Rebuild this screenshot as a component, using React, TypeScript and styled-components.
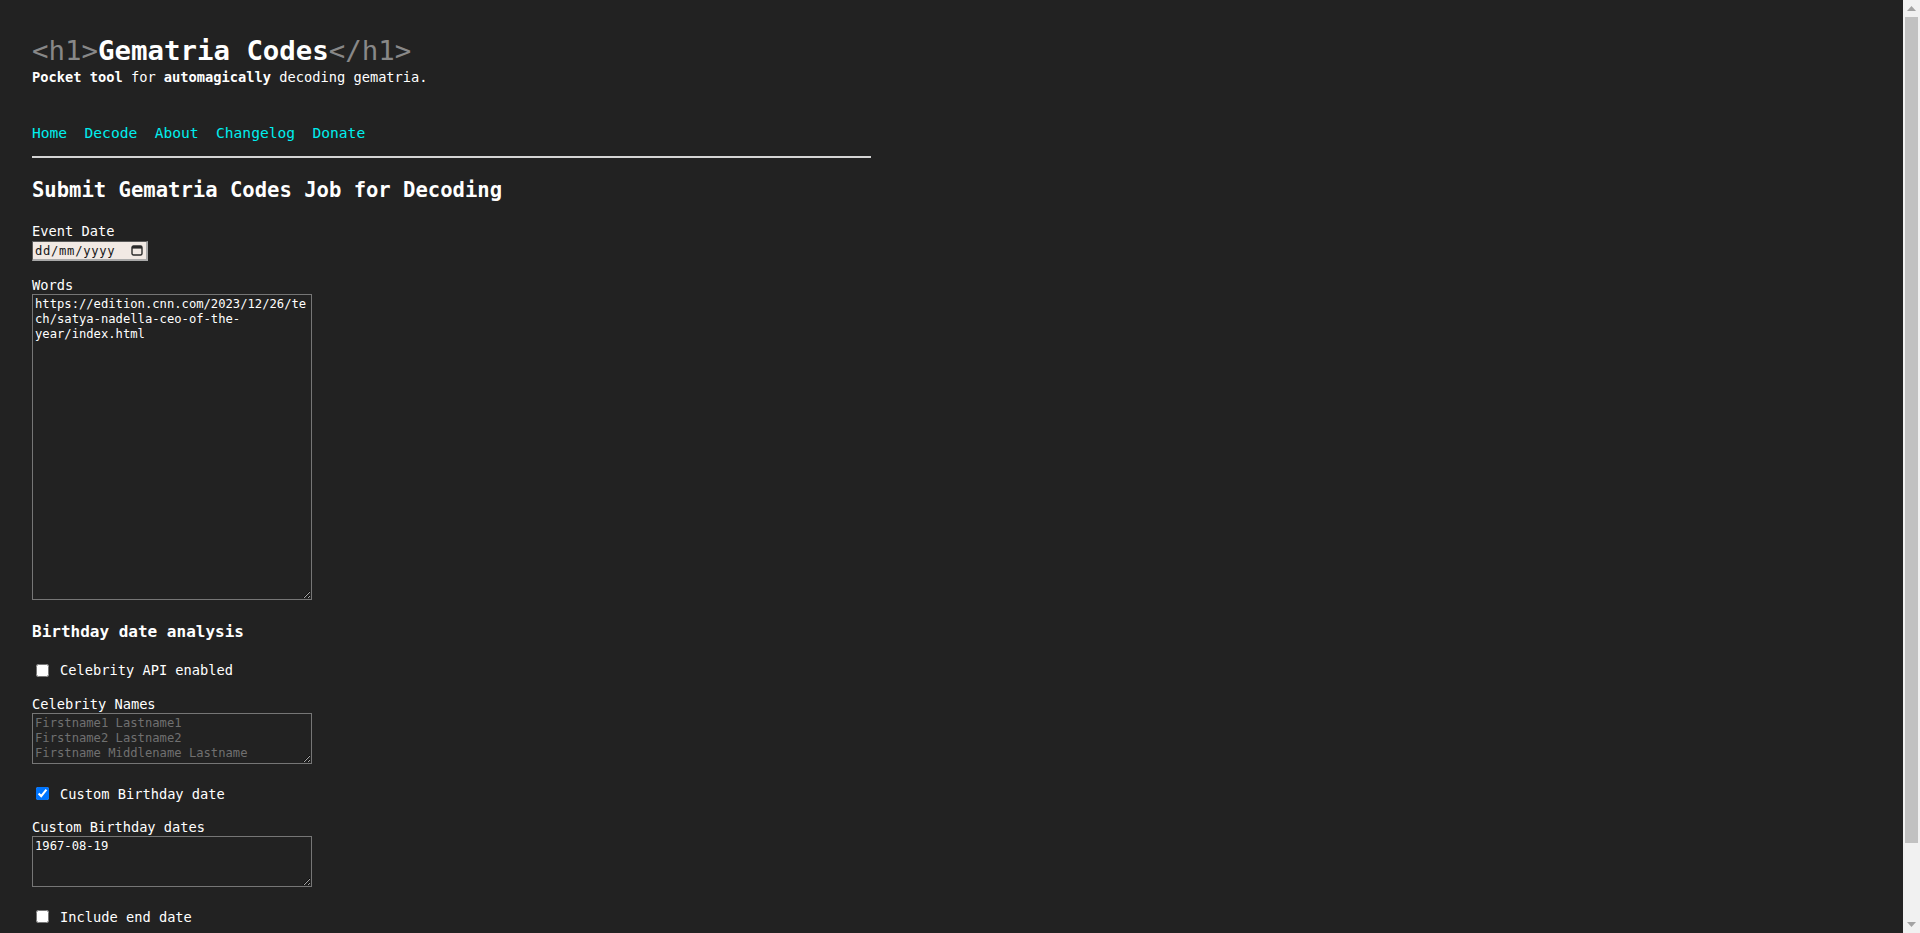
import * as React from 'react';
import styled, { createGlobalStyle } from 'styled-components';

const mono = `'DejaVu Sans Mono', 'Liberation Mono', monospace`;

const GlobalStyle = createGlobalStyle`
  html, body {
    margin: 0;
    padding: 0;
    background: #222;
  }
  html {
    scrollbar-width: none;
  }
  body {
    color: #fff;
    font-family: ${mono};
    font-size: 13.7px;
  }
`;

const Page = styled.div`
  padding: 33.5px 32px 36px;
`;

const Header = styled.header`
  width: 839px;
`;

const Title = styled.h1`
  margin: 0;
  font-size: 27.4px;
  line-height: 34px;
  font-weight: bold;
  color: #fff;
`;

const Tag = styled.span`
  font-weight: normal;
  color: #888;
`;

const Tagline = styled.p`
  margin: 0;
  font-size: 13.7px;
  line-height: 18px;
  b {
    font-weight: bold;
  }
`;

const Nav = styled.nav`
  display: flex;
  gap: 17.4px;
  margin-top: 37.5px;
  font-size: 14.6px;
  line-height: 20px;
  a {
    color: #0ee;
    text-decoration: none;
  }
`;

const Rule = styled.hr`
  margin: 13px 0 0;
  border: 0;
  border-top: 2px solid #d4d4d4;
  height: 0;
`;

const Form = styled.form`
  display: flex;
  flex-direction: column;
  align-items: flex-start;
`;

const Heading = styled.h2`
  margin: 19px 0 0;
  font-size: 20.55px;
  line-height: 26px;
  font-weight: bold;
`;

const SubHeading = styled.h3`
  margin: 22.5px 0 0;
  font-size: 16px;
  line-height: 20px;
  font-weight: bold;
`;

const Label = styled.label<{ $gap: number }>`
  display: block;
  margin-top: ${(p) => p.$gap}px;
  font-size: 13.7px;
  line-height: 18px;
`;

const DateBox = styled.div`
  display: flex;
  align-items: center;
  justify-content: space-between;
  box-sizing: border-box;
  width: 116px;
  height: 20px;
  margin-top: 1px;
  padding: 0 3px 0 2px;
  background: #f1e9e4;
  border-top: 1px solid #5a5a5a;
  border-left: 1px solid #5a5a5a;
  border-right: 2px solid #a9a9a9;
  border-bottom: 2px solid #a9a9a9;
  color: #161616;
  font-size: 12.18px;
  letter-spacing: 0.7px;
`;

const TextArea = styled.textarea`
  display: block;
  box-sizing: border-box;
  width: 280px;
  margin: 0;
  padding: 2px;
  background: #222;
  color: #fff;
  border: 1px solid #767676;
  font-family: ${mono};
  font-size: 12.18px;
  line-height: 15px;
  color-scheme: dark;
  outline: none;
  &::placeholder {
    color: #707070;
  }
`;

const CheckRow = styled.label<{ $gap: number }>`
  display: flex;
  align-items: center;
  height: 18px;
  margin-top: ${(p) => p.$gap}px;
  font-size: 13.7px;
  line-height: 18px;
  input {
    width: 13px;
    height: 13px;
    margin: 0 11px 0 4px;
  }
`;

const SubmitButton = styled.button`
  margin-top: 24px;
  padding: 4px 14px;
  font-family: ${mono};
  font-size: 13.7px;
`;

/* browser scrollbar, drawn over the right edge of the window */
const ScrollTrack = styled.div`
  position: fixed;
  top: 0;
  right: 0;
  width: 17px;
  height: 100vh;
  background: #f1f1f1;
  display: flex;
  flex-direction: column;
  align-items: center;
`;

const ScrollArrow = styled.div<{ $down?: boolean }>`
  height: 17px;
  display: flex;
  align-items: center;
  justify-content: center;
  margin-top: ${(p) => (p.$down ? 'auto' : '0')};
`;

const ScrollThumb = styled.div`
  width: 13px;
  height: 826px;
  background: #c1c1c1;
`;

function Arrow({ down }: { down?: boolean }) {
  return (
    <ScrollArrow $down={down}>
      <svg width="9" height="5" viewBox="0 0 9 5">
        <path d={down ? 'M0 0 H9 L4.5 5 Z' : 'M0 5 H9 L4.5 0 Z'} fill="#a3a3a3" />
      </svg>
    </ScrollArrow>
  );
}

function CalendarIcon() {
  return (
    <svg width="12" height="11" viewBox="0 0 12 11">
      <rect x="1" y="1" width="10" height="9" rx="1.5" fill="none" stroke="#2b2b2b" strokeWidth="1.4" />
      <rect x="1" y="1" width="10" height="2.6" fill="#2b2b2b" />
    </svg>
  );
}

export default function App() {
  return (
    <>
      <GlobalStyle />
      <Page>
        <Header>
          <Title>
            <Tag>&lt;h1&gt;</Tag>Gematria Codes<Tag>&lt;/h1&gt;</Tag>
          </Title>
          <Tagline>
            <b>Pocket tool</b> for <b>automagically</b> decoding gematria.
          </Tagline>
          <Nav>
            <a href="#">Home</a>
            <a href="#">Decode</a>
            <a href="#">About</a>
            <a href="#">Changelog</a>
            <a href="#">Donate</a>
          </Nav>
          <Rule />
        </Header>

        <Form onSubmit={(e) => e.preventDefault()}>
          <Heading>Submit Gematria Codes Job for Decoding</Heading>

          <Label $gap={19.3}>Event Date</Label>
          <DateBox>
            <span>dd/mm/yyyy</span>
            <CalendarIcon />
          </DateBox>

          <Label $gap={14.3}>Words</Label>
          <TextArea
            rows={20}
            readOnly
            defaultValue="https://edition.cnn.com/2023/12/26/tech/satya-nadella-ceo-of-the-year/index.html"
          />

          <SubHeading>Birthday date analysis</SubHeading>

          <CheckRow $gap={19}>
            <input type="checkbox" />
            Celebrity API enabled
          </CheckRow>

          <Label $gap={15.5}>Celebrity Names</Label>
          <TextArea
            rows={3}
            placeholder={'Firstname1 Lastname1\nFirstname2 Lastname2\nFirstname Middlename Lastname'}
          />

          <CheckRow $gap={21}>
            <input type="checkbox" defaultChecked />
            Custom Birthday date
          </CheckRow>

          <Label $gap={15}>Custom Birthday dates</Label>
          <TextArea rows={3} readOnly defaultValue="1967-08-19" />

          <CheckRow $gap={21}>
            <input type="checkbox" />
            Include end date
          </CheckRow>

          <SubmitButton type="submit">Submit</SubmitButton>
        </Form>
      </Page>
      <ScrollTrack>
        <Arrow />
        <ScrollThumb />
        <Arrow down />
      </ScrollTrack>
    </>
  );
}
